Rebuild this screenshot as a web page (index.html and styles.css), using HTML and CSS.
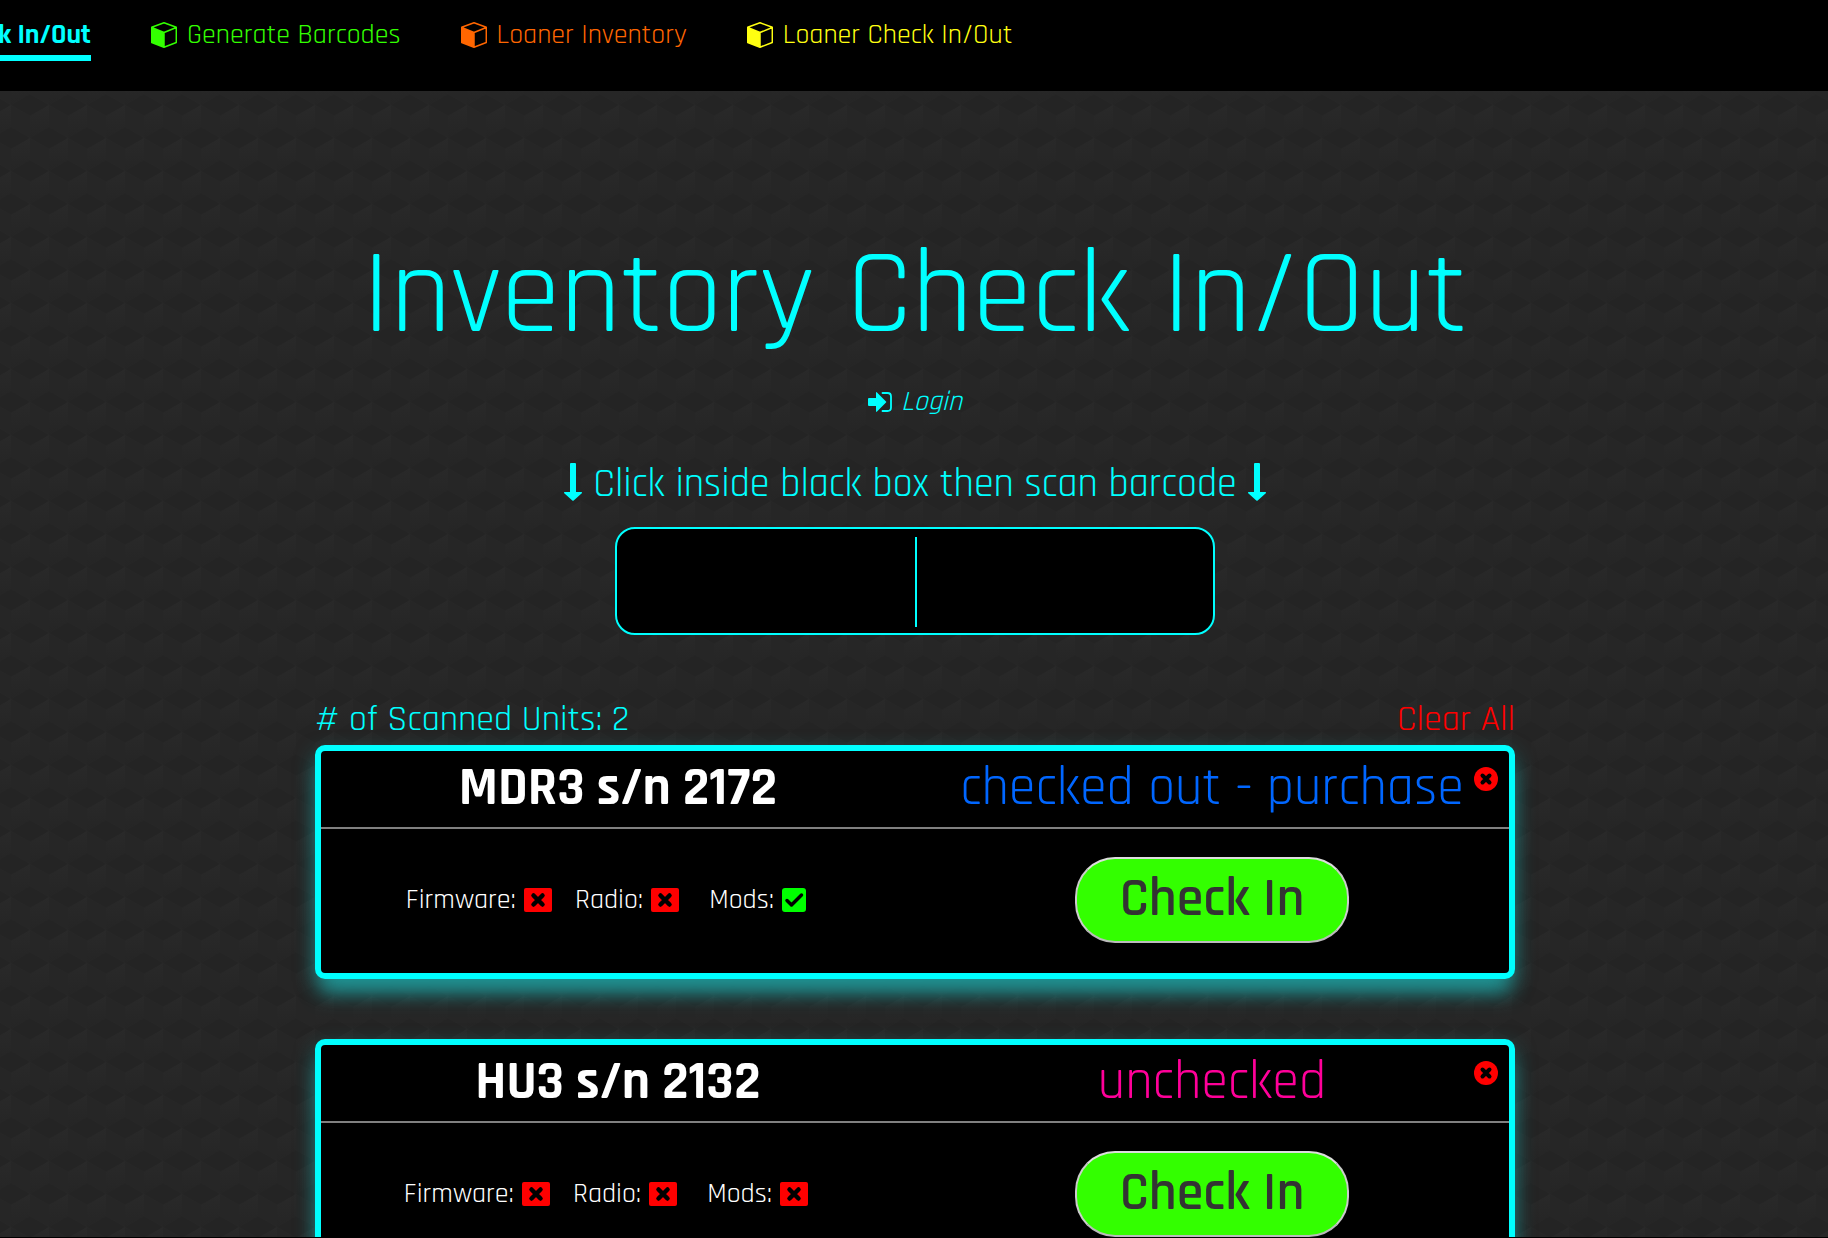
FILE: index.html
```html
<!DOCTYPE html>
<html lang="en">
<head>
<meta charset="utf-8">
<title>Inventory Check In/Out</title>
<link rel="stylesheet" href="styles.css">
</head>
<body>
<svg class="sprite" aria-hidden="true">
  <symbol id="cube" viewBox="0 0 26 26"><path d="M.7 5.500 13 10.500V25.300L.7 20.500z"/><path class="line" d="M13 .8 25.300 5.300V20.500L13 25.200.7 20.500V5.300zM.7 5.500 13 10.500 25.300 5.500M13 10.500V25" stroke-width="1.500"/></symbol>
  <symbol id="login" viewBox="0 0 24 20"><path d="M1 6h7V1q0-1.500 1-.5l9 9q.5.500 0 1l-9 9q-1 1-1-.5v-5H1q-1 0-1-1V7q0-1 1-1z"/><path class="line" d="M14.500 1H19.500Q23 1 23 4.500V15.500Q23 19 19.500 19H14.500" stroke-width="1.800"/></symbol>
  <symbol id="arrow" viewBox="0 0 18 38"><path d="M7 0h4a1 1 0 0 1 1 1v28h5q2 0 .5 1.600L9.700 37.500q-.7.700-1.400 0L.5 30.600Q-1 29 1 29h5V1a1 1 0 0 1 1-1z"/></symbol>
  <symbol id="no" viewBox="0 0 28 24"><rect width="28" height="24" rx="2"/><path class="mark" d="m9.500 7.500 9 9m0-9-9 9" stroke-width="4.500"/></symbol>
  <symbol id="yes" viewBox="0 0 24 24"><rect width="24" height="24" rx="3"/><path class="mark" d="m5 12.500 4.500 4.500L19.500 7" stroke-width="3.500"/></symbol>
  <symbol id="remove" viewBox="0 0 24 24"><circle cx="12" cy="12" r="12"/><path class="mark" d="m8.500 8.500 7 7m0-7-7 7" stroke-width="4"/></symbol>
</svg>

<header class="topbar">
  <nav class="nav">
    <a class="nav-link current" href="#inout"><svg class="cube"><use href="#cube"/></svg>Inventory Check In/Out</a>
    <a class="nav-link green" href="#barcodes"><svg class="cube"><use href="#cube"/></svg>Generate Barcodes</a>
    <a class="nav-link orange" href="#loaners"><svg class="cube"><use href="#cube"/></svg>Loaner Inventory</a>
    <a class="nav-link yellow" href="#loaner-inout"><svg class="cube"><use href="#cube"/></svg>Loaner Check In/Out</a>
  </nav>
</header>

<main class="page">
  <h1 class="title">Inventory Check In/Out</h1>
  <a class="login" href="#login"><svg class="login-icon"><use href="#login"/></svg>Login</a>
  <label class="prompt" for="scan"><svg class="arrow"><use href="#arrow"/></svg>Click inside black box then scan barcode<svg class="arrow"><use href="#arrow"/></svg></label>
  <div class="scan-box"><input class="scan" id="scan" type="text" autocomplete="off"></div>

  <section class="units">
    <div class="units-head">
      <span>&#35; of Scanned Units: 2</span>
      <button class="clear" type="button">Clear All</button>
    </div>

    <article class="card">
      <div class="card-head">
        <h2 class="unit">MDR3 s/n 2172</h2>
        <p class="status out">checked out - purchase</p>
        <button class="remove" type="button" aria-label="Remove MDR3 2172"><svg class="remove-icon"><use href="#remove"/></svg></button>
      </div>
      <div class="card-body">
        <ul class="checks">
          <li class="check">Firmware: <svg class="no"><use href="#no"/></svg></li>
          <li class="check">Radio: <svg class="no"><use href="#no"/></svg></li>
          <li class="check last">Mods: <svg class="yes"><use href="#yes"/></svg></li>
        </ul>
        <button class="check-in" type="button">Check In</button>
      </div>
    </article>

    <article class="card">
      <div class="card-head">
        <h2 class="unit">HU3 s/n 2132</h2>
        <p class="status unchecked">unchecked</p>
        <button class="remove" type="button" aria-label="Remove HU3 2132"><svg class="remove-icon"><use href="#remove"/></svg></button>
      </div>
      <div class="card-body">
        <ul class="checks">
          <li class="check">Firmware: <svg class="no"><use href="#no"/></svg></li>
          <li class="check">Radio: <svg class="no"><use href="#no"/></svg></li>
          <li class="check last">Mods: <svg class="no"><use href="#no"/></svg></li>
        </ul>
        <button class="check-in" type="button">Check In</button>
      </div>
    </article>
  </section>
</main>
</body>
</html>
```
FILE: styles.css
```css
* { box-sizing: border-box; }

html { height: 100%; }

body {
  margin: 0;
  height: 100%;
  padding-bottom: 1px;
  overflow: hidden;
  display: flex;
  flex-direction: column;
  font-family: Rajdhani, Roboto, "Liberation Sans", sans-serif;
  font-weight: 400;
  color: #fff;
  background: #000;
}

svg { fill: currentColor; flex: none; }
.sprite { position: absolute; width: 0; height: 0; }
.mark { fill: none; stroke: #000; stroke-linecap: round; stroke-linejoin: round; }
.line { fill: none; stroke: currentColor; stroke-linecap: round; stroke-linejoin: round; }
button { font: inherit; color: inherit; background: none; border: 0; padding: 0; cursor: pointer; }
a { text-decoration: none; }

.topbar { height: 91px; flex: none; overflow: hidden; background: #000; }
.nav { display: flex; gap: 60px; width: max-content; padding-top: 14px; margin-left: -210px; }
.nav-link {
  display: flex;
  align-items: center;
  gap: 10px;
  height: 47px;
  font-size: 28px;
  line-height: 40px;
  white-space: nowrap;
  border-bottom: 6px solid transparent;
}
.cube { width: 26px; height: 26px; }
.current { color: #0ff; font-weight: 700; border-color: #0ff; }
.green { color: #3f0; }
.orange { color: #f60; }
.yellow { color: #ff1; }

.page {
  flex: 1;
  min-height: 0;
  overflow: hidden;
  display: flex;
  flex-direction: column;
  align-items: center;
  padding: 0 20px 0 22px;
  color: #0ff;
  background: #262626 url("data:image/svg+xml,%3Csvg xmlns='http://www.w3.org/2000/svg' width='38' height='66'%3E%3Cdefs%3E%3ClinearGradient id='l' x2='0' y2='1'%3E%3Cstop stop-color='%23292929'/%3E%3Cstop offset='1' stop-color='%23252525'/%3E%3C/linearGradient%3E%3Cg id='c'%3E%3Cpath fill='%23242424' d='M0-11 19 0 0 11-19 0z'/%3E%3Cpath fill='%23262626' d='M-19 0 0 11v22l-19-11z'/%3E%3Cpath fill='url(%23l)' d='M0 11 19 0v22L0 33z'/%3E%3C/g%3E%3C/defs%3E%3Cuse href='%23c' x='19' y='11'/%3E%3Cuse href='%23c' y='44'/%3E%3Cuse href='%23c' x='38' y='44'/%3E%3Cuse href='%23c' y='-22'/%3E%3Cuse href='%23c' x='38' y='-22'/%3E%3C/svg%3E") 11px 3px;
}

.title { margin: 140px 0 0; font-size: 120px; line-height: 130px; font-weight: 400; text-align: center; }

.login {
  display: flex;
  align-items: center;
  gap: 9px;
  margin-top: 25px;
  font-size: 28px;
  line-height: 32px;
  font-style: italic;
  color: #0ff;
}
.login-icon { width: 24px; height: 20px; }

.prompt { display: flex; align-items: flex-start; gap: 11px; margin-top: 45px; font-size: 40px; line-height: 44px; }
.arrow { width: 18px; height: 38px; }

.scan-box { margin-top: 20px; }
.scan {
  display: block;
  width: 600px;
  height: 108px;
  padding: 0 20px;
  font: inherit;
  font-size: 72px;
  text-align: center;
  color: #0ff;
  caret-color: #0ff;
  border: 2px solid #0ff;
  border-radius: 20px;
  outline: 0;
  background: linear-gradient(#0ff, #0ff) 298px 8px / 2px 90px no-repeat #000;
}

.units { width: 100%; max-width: 1200px; margin-top: 64px; display: flex; flex-direction: column; }
.units-head { display: flex; justify-content: space-between; font-size: 36px; line-height: 42px; margin-bottom: 4px; }
.clear { color: #f00; }

.card {
  margin-bottom: 60px;
  border: 6px solid #0ff;
  border-radius: 10px;
  background: #000;
  color: #fff;
  box-shadow: 0 20px 20px -6px rgba(30, 160, 160, .8), 0 8px 20px rgba(30, 160, 160, .5);
}
.card-head {
  position: relative;
  display: grid;
  grid-template-columns: 1fr 1fr;
  height: 78px;
  border-bottom: 2px solid #808080;
  text-align: center;
  font-size: 54px;
  line-height: 76px;
}
.unit, .status { margin: 0; font-size: inherit; white-space: nowrap; }
.unit { font-weight: 700; }
.status { font-weight: 400; }
.out { color: #06f; }
.unchecked { color: #f09; }
.remove { position: absolute; top: 16px; right: 11px; width: 24px; height: 24px; color: #f00; }
.remove-icon { display: block; width: 24px; height: 24px; }

.card-body { display: grid; grid-template-columns: 1fr 1fr; justify-items: center; align-items: start; height: 144px; padding-top: 28px; }
.checks { display: flex; gap: 23px; margin: 27px 24px 0 0; padding: 0; list-style: none; font-size: 28px; line-height: 32px; }
.check { display: flex; align-items: center; gap: 8px; }
.last { margin-left: 7px; }
.no { width: 28px; height: 24px; color: #f00; }
.yes { width: 24px; height: 24px; color: #0f0; }
.check-in {
  width: 274px;
  height: 86px;
  border: 2px solid;
  border-color: #ddd #ccc #bbb;
  border-radius: 40px;
  background: #3f0;
  color: #333;
  font-size: 54px;
  line-height: 74px;
  font-weight: 600;
}
```
